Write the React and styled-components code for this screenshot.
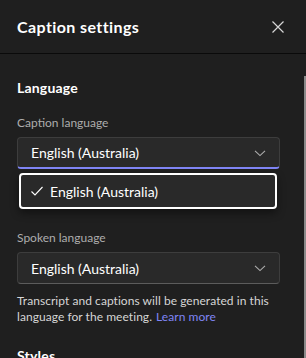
import React from "react";
import styled, { createGlobalStyle } from "styled-components";

const purple = "#7f85f5";

const GlobalStyle = createGlobalStyle`
  html, body {
    margin: 0;
    padding: 0;
    background: #1f1f1f;
    font-family: "Segoe UI", "Lato", "Noto Sans", sans-serif;
    overflow: hidden;
  }
`;

const Panel = styled.div`
  position: relative;
  width: 306px;
  height: 358px;
  background: #1f1f1f;
  color: #ffffff;
  overflow: hidden;
`;

const Header = styled.div`
  display: flex;
  align-items: center;
  justify-content: space-between;
  height: 54px;
  padding: 0 18px 0 17px;
  box-sizing: border-box;
  border-bottom: 1px solid #0a0a0a;
`;

const Title = styled.h1`
  margin: 0;
  font-size: 16px;
  font-weight: 700;
  line-height: 22px;
  letter-spacing: 0.4px;
`;

const CloseButton = styled.button`
  display: flex;
  align-items: center;
  justify-content: center;
  width: 20px;
  height: 20px;
  padding: 0;
  border: none;
  background: transparent;
  color: #d6d6d6;
`;

const Scrollbar = styled.div`
  position: absolute;
  right: 0;
  top: 76px;
  width: 2px;
  height: 290px;
  background: #8a8a8a;
`;

const Body = styled.div`
  padding: 25px 26px 0 17px;
`;

const SectionTitle = styled.h2`
  margin: 0 0 18px;
  font-size: 14px;
  font-weight: 700;
  line-height: 18px;
  letter-spacing: 0.2px;
`;

const Field = styled.div`
  position: relative;
  margin-bottom: ${(p) => p.$gap || 0}px;
`;

const Label = styled.div`
  font-size: 12px;
  line-height: 16px;
  color: #adadad;
  margin-bottom: 6px;
`;

const Select = styled.div`
  display: flex;
  align-items: center;
  justify-content: space-between;
  height: 32px;
  box-sizing: border-box;
  padding: 0 12px 0 13px;
  background: #292929;
  border: 1px solid #3d3d3d;
  border-bottom: ${(p) => (p.$open ? `2px solid ${purple}` : "1px solid #5c5c5c")};
  border-radius: 4px;
  font-size: 14px;
  color: #ffffff;
`;

const Menu = styled.div`
  position: absolute;
  left: 2px;
  right: 3px;
  top: 58px;
  height: 36px;
  box-sizing: border-box;
  display: flex;
  align-items: center;
  gap: 6px;
  padding: 0 9px;
  background: #292929;
  border: 2px solid #ffffff;
  border-radius: 4px;
  box-shadow: 0 4px 8px rgba(0, 0, 0, 0.45);
  font-size: 14px;
  color: #ffffff;
  z-index: 2;
`;

const Helper = styled.p`
  margin: 9px 0 0;
  font-size: 12px;
  line-height: 16px;
  letter-spacing: 0.05px;
  color: #d6d6d6;
`;

const Link = styled.a`
  color: ${purple};
  text-decoration: none;
  margin-left: 4px;
`;

const NextTitle = styled(SectionTitle)`
  margin-top: 22px;
`;

const Chevron = () => (
  <svg width="14" height="14" viewBox="0 0 14 14" fill="none">
    <path d="M2 4.8L7 9.6L12 4.8" stroke="#adadad" strokeWidth="1.1" />
  </svg>
);

const Check = () => (
  <svg width="14" height="14" viewBox="0 0 14 14" fill="none">
    <path d="M1.5 7.5L5 11L12.5 3" stroke="#ffffff" strokeWidth="1.1" />
  </svg>
);

const CloseIcon = () => (
  <svg width="14" height="14" viewBox="0 0 14 14" fill="none">
    <path d="M1.5 1.5L12.5 12.5M12.5 1.5L1.5 12.5" stroke="currentColor" strokeWidth="1.2" />
  </svg>
);

export default function App() {
  return (
    <>
      <GlobalStyle />
      <Panel>
        <Header>
          <Title>Caption settings</Title>
          <CloseButton aria-label="Close">
            <CloseIcon />
          </CloseButton>
        </Header>
        <Scrollbar />
        <Body>
          <SectionTitle>Language</SectionTitle>
          <Field $gap={61}>
            <Label>Caption language</Label>
            <Select $open>
              English (Australia)
              <Chevron />
            </Select>
            <Menu>
              <Check />
              English (Australia)
            </Menu>
          </Field>
          <Field>
            <Label>Spoken language</Label>
            <Select>
              English (Australia)
              <Chevron />
            </Select>
            <Helper>
              Transcript and captions will be generated in this language for the meeting.
              <Link href="#">Learn more</Link>
            </Helper>
          </Field>
          <NextTitle>Styles</NextTitle>
        </Body>
      </Panel>
    </>
  );
}
